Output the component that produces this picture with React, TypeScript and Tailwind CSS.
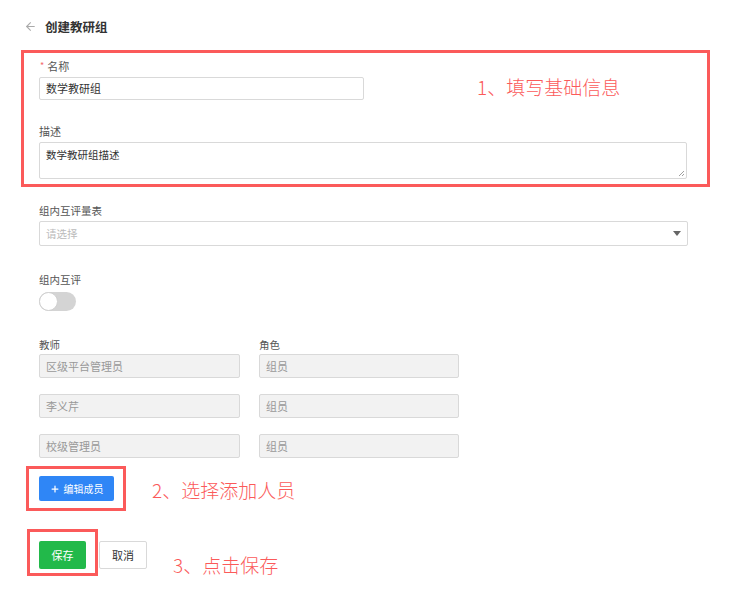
import { ArrowLeft, Plus } from 'lucide-react';

const font = { fontFamily: '"Noto Sans CJK SC", "Noto Sans", sans-serif' };

const members = [
  { name: '区级平台管理员', role: '组员' },
  { name: '李义芹', role: '组员' },
  { name: '校级管理员', role: '组员' },
];

export default function App() {
  return (
    <div className="relative w-[733px] h-[599px] bg-white overflow-hidden text-[#333]" style={font}>
      {/* 标题 */}
      <div className="flex items-center gap-[8px] pl-[24px] pt-[17px] h-[36px]">
        <ArrowLeft className="w-[13px] h-[13px] text-[#aaa]" strokeWidth={2} />
        <span className="text-[12.5px] font-bold text-[#333] leading-[20px]">创建教研组</span>
      </div>

      {/* 基础信息 */}
      <div className="relative ml-[21px] mt-[14px] w-[689px] border-[3px] border-[#fb5a5a] pl-[15px] pr-[20px] pt-[6px] pb-[5px]">
        <div className="flex items-center h-[14px] text-[11px] leading-[14px] text-[#555]">
          <span className="text-[#f56c6c] text-[9px] ml-[1px] mr-[3px]">*</span>
          名称
        </div>
        <div className="mt-[4px] w-[325px] h-[23px] border border-[#d9d9d9] rounded-[2px] flex items-center px-[6px] text-[11px] text-[#333]">
          数学教研组
        </div>
        <div className="mt-[24px] h-[14px] text-[11px] leading-[14px] text-[#555]">描述</div>
        <div className="relative mt-[4px] w-[648px] h-[37px] border border-[#d9d9d9] rounded-[2px] px-[6px] pt-[5px] text-[10.5px] leading-[14px] text-[#333]">
          数学教研组描述
          <svg className="absolute right-[1px] bottom-[1px]" width="7" height="7" viewBox="0 0 7 7">
            <path d="M1 6 L6 1 M4 6 L6 4" stroke="#888" strokeWidth="0.8" />
          </svg>
        </div>
        <div className="absolute left-[453px] top-[23px] text-[19px] leading-[22px] text-[#fb5a5a] font-light">
          1、填写基础信息
        </div>
      </div>

      <div className="pl-[39px]">
        {/* 量表 */}
        <div className="mt-[17px] h-[14px] text-[10.5px] leading-[14px] text-[#555]">组内互评量表</div>
        <div className="mt-[3px] w-[649px] h-[25px] border border-[#d9d9d9] rounded-[2px] flex items-center justify-between pl-[6px] pr-[6px] text-[10.5px] text-[#bbb]">
          请选择
          <svg width="8" height="5" viewBox="0 0 8 5">
            <path d="M0 0 L8 0 L4 5 Z" fill="#666" />
          </svg>
        </div>

        {/* 互评开关 */}
        <div className="mt-[27px] h-[14px] text-[10.5px] leading-[14px] text-[#555]">组内互评</div>
        <div className="mt-[5px] w-[37px] h-[19px] rounded-full bg-[#d4d4d4] relative">
          <div className="absolute left-0 top-0 w-[19px] h-[19px] rounded-full bg-white border border-[#d0d0d0]" />
        </div>

        {/* 成员 */}
        <div className="mt-[27px] flex gap-[19px] h-[14px] text-[10.5px] leading-[14px] text-[#555]">
          <div className="w-[201px]">教师</div>
          <div className="w-[200px]">角色</div>
        </div>
        <div className="mt-[2px] flex flex-col gap-[16px]">
          {members.map((m) => (
            <div key={m.name} className="flex gap-[19px]">
              <div className="w-[201px] h-[24px] bg-[#f2f2f2] border border-[#d9d9d9] rounded-[2px] flex items-center px-[6px] text-[11px] text-[#999]">
                {m.name}
              </div>
              <div className="w-[200px] h-[24px] bg-[#f2f2f2] border border-[#d9d9d9] rounded-[2px] flex items-center px-[6px] text-[11px] text-[#999]">
                {m.role}
              </div>
            </div>
          ))}
        </div>
      </div>

      {/* 编辑成员 */}
      <div className="flex items-center mt-[8px] ml-[26px]">
        <div className="border-[3px] border-[#fb5a5a] w-[100px] h-[45px] pl-[10px] pt-[7px]">
          <button className="w-[75px] h-[25px] bg-[#2f86f6] rounded-[2px] flex items-center justify-center gap-[4px] text-white text-[10px]">
            <Plus className="w-[10px] h-[10px]" strokeWidth={3} />
            编辑成员
          </button>
        </div>
        <div className="ml-[26px] mt-[2px] text-[19px] leading-[22px] text-[#fb5a5a] font-light">2、选择添加人员</div>
      </div>

      {/* 保存 */}
      <div className="flex items-start mt-[18px] ml-[27px]">
        <div className="border-[3px] border-[#fb5a5a] w-[71px] h-[47px] pl-[9px] pt-[9px]">
          <button className="w-[47px] h-[28px] bg-[#22b94a] rounded-[2px] text-white text-[11px]">保存</button>
        </div>
        <button className="ml-[1px] mt-[12px] w-[48px] h-[28px] border border-[#d9d9d9] rounded-[2px] bg-white text-[11px] text-[#333]">
          取消
        </button>
        <div className="ml-[26px] mt-[25px] text-[19px] leading-[22px] text-[#fb5a5a] font-light">3、点击保存</div>
      </div>
    </div>
  );
}
